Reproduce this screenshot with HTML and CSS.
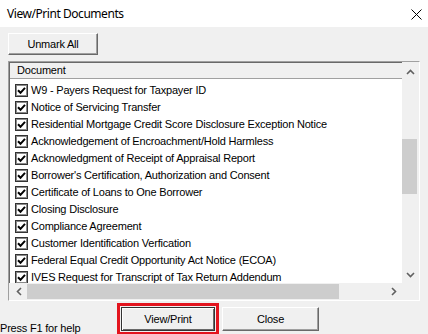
FILE: index.html
```html
<!DOCTYPE html>
<html lang="en">
<head>
  <meta charset="UTF-8">
  <title>View/Print Documents</title>
  <link rel="stylesheet" href="styles.css">
</head>
<body>
  <div class="dialog">
    <!-- Barra de título -->
    <div class="titlebar">
      <span class="title">View/Print Documents</span>
      <svg class="close-x" width="11" height="11" viewBox="0 0 11 11">
        <path d="M0.5 0.5 L10.5 10.5 M10.5 0.5 L0.5 10.5" stroke="#000" stroke-width="1"/>
      </svg>
    </div>

    <div class="toolbar">
      <button class="btn btn-unmark">Unmark All</button>
    </div>

    <!-- Lista de documentos -->
    <div class="listbox">
      <div class="list-main">
        <div class="list-header">Document</div>
        <div class="list-rows" id="rows"></div>
      </div>
      <div class="vscroll">
        <div class="arrow">
          <svg width="9" height="6" viewBox="0 0 9 6"><path d="M1 5 L4.5 1.5 L8 5" fill="none" stroke="#606060" stroke-width="1.6"/></svg>
        </div>
        <div class="vtrack"><div class="vthumb"></div></div>
        <div class="arrow">
          <svg width="9" height="6" viewBox="0 0 9 6"><path d="M1 1 L4.5 4.5 L8 1" fill="none" stroke="#606060" stroke-width="1.6"/></svg>
        </div>
      </div>
      <div class="hscroll">
        <div class="arrow">
          <svg width="6" height="9" viewBox="0 0 6 9"><path d="M5 1 L1.5 4.5 L5 8" fill="none" stroke="#606060" stroke-width="1.6"/></svg>
        </div>
        <div class="htrack"><div class="hthumb"></div></div>
        <div class="arrow">
          <svg width="6" height="9" viewBox="0 0 6 9"><path d="M1 1 L4.5 4.5 L1 8" fill="none" stroke="#606060" stroke-width="1.6"/></svg>
        </div>
      </div>
      <div class="corner"></div>
    </div>

    <div class="footer">
      <span class="status">Press F1 for help</span>
      <div class="highlight">
        <button class="btn btn-default">View/Print</button>
      </div>
      <button class="btn btn-close">Close</button>
    </div>
  </div>

  <script>
    const docs = [
      'W9 - Payers Request for Taxpayer ID',
      'Notice of Servicing Transfer',
      'Residential Mortgage Credit Score Disclosure Exception Notice',
      'Acknowledgement of Encroachment/Hold Harmless',
      'Acknowledgment of Receipt of Appraisal Report',
      "Borrower's Certification, Authorization and Consent",
      'Certificate of Loans to One Borrower',
      'Closing Disclosure',
      'Compliance Agreement',
      'Customer Identification Verfication',
      'Federal Equal Credit Opportunity Act Notice (ECOA)',
      'IVES Request for Transcript of Tax Return Addendum'
    ];

    const rows = document.getElementById('rows');
    docs.forEach((name) => {
      const row = document.createElement('div');
      row.className = 'row';
      row.innerHTML = `
        <span class="check">
          <svg width="9" height="9" viewBox="0 0 9 9"><path d="M1 4.2 L3.5 6.8 L8 1.8" fill="none" stroke="#000" stroke-width="2"/></svg>
        </span>
        <span class="label">${name}</span>
      `;
      rows.appendChild(row);
    });
  </script>
</body>
</html>
```

FILE: styles.css
```css
/* Janela */
body {
  margin: 0;
  font-family: 'Liberation Sans', Arial, sans-serif;
  font-size: 11px;
  letter-spacing: -0.2px;
  color: #000;
}

.dialog {
  width: 428px;
  height: 334px;
  background-color: #f0f0f0;
  overflow: hidden;
}

.titlebar {
  height: 27px;
  background-color: #fff;
  display: flex;
  align-items: center;
  justify-content: space-between;
  padding: 0 6px 0 7px;
}

.title {
  font-family: 'Noto Sans', sans-serif;
  font-size: 12px;
  letter-spacing: -0.45px;
  color: #000;
}

.close-x {
  margin-top: 1px;
}

/* Botões */
.btn {
  font-family: 'Liberation Sans', Arial, sans-serif;
  font-size: 11px;
  letter-spacing: -0.2px;
  color: #000;
  background-color: #f0f0f0;
  border: 1px solid;
  border-color: #fff #696969 #696969 #fff;
  box-shadow: inset -1px -1px #a0a0a0;
  padding: 0;
  height: 22px;
}

.toolbar {
  padding: 6px 8px 0;
}

.btn-unmark {
  width: 90px;
  height: 22px;
}

/* Lista */
.listbox {
  margin: 6px 8px 0;
  height: 240px;
  box-sizing: border-box;
  border: 1px solid;
  border-color: #a0a0a0 #fff #fff #a0a0a0;
  box-shadow: inset 1px 1px #696969;
  display: grid;
  grid-template-columns: 1fr 17px;
  grid-template-rows: 1fr 17px;
  background-color: #fff;
}

.list-main {
  overflow: hidden;
  padding: 1px 0 0 1px;
}

.list-header {
  height: 15px;
  line-height: 15px;
  background-color: #f0f0f0;
  border-bottom: 1px solid #a0a0a0;
  padding-left: 7px;
}

.list-rows {
  padding-top: 3px;
}

.row {
  height: 17px;
  display: flex;
  align-items: center;
  white-space: nowrap;
  padding-left: 5px;
}

.check {
  width: 13px;
  height: 13px;
  box-sizing: border-box;
  border: 1px solid #333;
  box-shadow: inset 0 0 0 1px #8a8a8a;
  background-color: #fff;
  display: flex;
  align-items: center;
  justify-content: center;
  margin-right: 3px;
}

.label {
  line-height: 13px;
}

/* Barras de rolagem */
.vscroll {
  background-color: #f0f0f0;
  display: flex;
  flex-direction: column;
  padding-top: 1px;
}

.vscroll .arrow {
  height: 17px;
  display: flex;
  align-items: center;
  justify-content: center;
}

.vtrack {
  flex: 1;
  padding-top: 59px;
}

.vthumb {
  width: 15px;
  height: 55px;
  background-color: #cdcdcd;
}

.hscroll {
  background-color: #f0f0f0;
  display: flex;
  padding-left: 1px;
}

.hscroll .arrow {
  width: 17px;
  display: flex;
  align-items: center;
  justify-content: center;
}

.htrack {
  flex: 1;
  display: flex;
  align-items: center;
}

.hthumb {
  width: 312px;
  height: 15px;
  background-color: #cdcdcd;
}

.corner {
  background-color: #f0f0f0;
}

/* Rodapé */
.footer {
  display: flex;
  align-items: flex-start;
  margin-top: 2px;
}

.status {
  width: 117px;
  padding-top: 19px;
}

.highlight {
  border: 3px solid #e3141e;
  padding: 1px;
}

.btn-default {
  width: 94px;
  height: 24px;
  border: 1px solid #333;
  box-shadow: inset 1px 1px #fff, inset -1px -1px #696969;
}

.btn-close {
  width: 97px;
  height: 24px;
  margin: 4px 0 0 3px;
}
```
